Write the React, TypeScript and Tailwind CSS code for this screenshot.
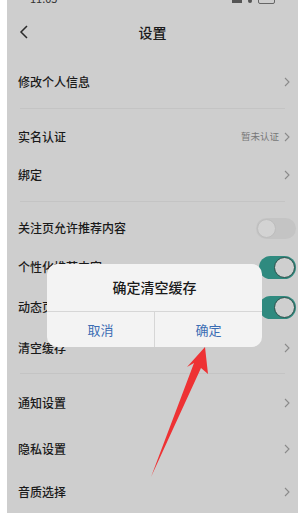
import React from "react";

const font = { fontFamily: '"Noto Sans CJK SC", "Noto Sans", sans-serif' };

function Chevron() {
  return (
    <svg width="6" height="10" viewBox="0 0 6 10" className="shrink-0">
      <path d="M1 1l4 4-4 4" fill="none" stroke="#8a8a8a" strokeWidth="1.1" />
    </svg>
  );
}

function Toggle({ on }: { on: boolean }) {
  return on ? (
    <div className="w-[37px] h-[23px] rounded-full bg-[#2f8a7f] flex items-center justify-end pr-[1px]">
      <div className="w-[21px] h-[21px] rounded-full bg-[#cfcfcf] border-[1.5px] border-[#2c4f4a]" />
    </div>
  ) : (
    <div className="w-[40px] h-[21px] rounded-full bg-[#c4c4c4] flex items-center pl-[1px]">
      <div className="w-[19px] h-[19px] rounded-full bg-[#d3d3d3] border border-[#bdbdbd]" />
    </div>
  );
}

function Row({
  label,
  h,
  right,
  pr = "pr-[8px]",
}: {
  label: string;
  h: string;
  right?: React.ReactNode;
  pr?: string;
}) {
  return (
    <div className={`flex items-center justify-between pl-[11px] ${pr} ${h}`}>
      <span className="text-[12px] font-medium text-[#1a1a1a] leading-none">{label}</span>
      {right ?? <Chevron />}
    </div>
  );
}

function Divider({ h }: { h: string }) {
  return (
    <div className={`flex items-center px-[13px] ${h}`}>
      <div className="h-px w-full bg-[#c4c4c4]" />
    </div>
  );
}

export default function App() {
  return (
    <div className="relative w-[306px] h-[514px] bg-white overflow-hidden" style={font}>
      <div className="ml-[7px] w-[291px] h-[513px] bg-[#cecece] flex flex-col">
        {/* status */}
        <div className="h-[5px] overflow-hidden flex justify-between px-[23px]">
          <span className="text-[11px] text-[#333] leading-none -mt-[7px]">11:05</span>
          <div className="flex items-center gap-[6px] -mt-[4px]">
            <div className="w-[10px] h-[5px] bg-[#555]" />
            <div className="w-[4px] h-[4px] bg-[#555] rounded-full" />
            <div className="w-[17px] h-[6px] border border-[#666] rounded-[2px]" />
          </div>
        </div>
        {/* header */}
        <div className="h-[54px] flex items-center relative">
          <svg width="10" height="14" viewBox="0 0 10 14" className="ml-[12px]">
            <path d="M8 1L2 7l6 6" fill="none" stroke="#2a2a2a" strokeWidth="1.5" />
          </svg>
          <span className="absolute left-0 right-0 text-center text-[14px] font-medium text-[#1a1a1a]">设置</span>
        </div>
        <Row label="修改个人信息" h="h-[46px]" />
        <Divider h="h-[7px]" />
        <div className="h-[6px]" />
        <Row
          label="实名认证"
          h="h-[38px]"
          right={
            <div className="flex items-center gap-[5px]">
              <span className="text-[9.5px] text-[#777] leading-none">暂未认证</span>
              <Chevron />
            </div>
          }
        />
        <Row label="绑定" h="h-[38px]" />
        <Divider h="h-[14px]" />
        <Row label="关注页允许推荐内容" h="h-[40px]" pr="pr-[2px]" right={<Toggle on={false} />} />
        <Row label="个性化推荐内容" h="h-[38px]" pr="pr-[2px]" right={<Toggle on />} />
        <Row label="动态页展示内容" h="h-[42px]" pr="pr-[2px]" right={<Toggle on />} />
        <Row label="清空缓存" h="h-[40px]" />
        <Divider h="h-[10px]" />
        <Row label="通知设置" h="h-[50px]" />
        <Row label="隐私设置" h="h-[42px]" />
        <Row label="音质选择" h="h-[43px]" />
      </div>

      {/* dialog */}
      <div className="absolute left-[47px] top-[264px] w-[215px] h-[83px] bg-[#f3f3f3] rounded-[10px] flex flex-col">
        <div className="h-[48px] flex items-center justify-center border-b border-[#d6d6d6]">
          <span className="text-[14px] font-medium text-[#1a1a1a]">确定清空缓存</span>
        </div>
        <div className="flex flex-1">
          <div className="flex-1 flex items-center justify-center border-r border-[#d6d6d6]">
            <span className="text-[13px] text-[#3b6db3]">取消</span>
          </div>
          <div className="flex-1 flex items-center justify-center">
            <span className="text-[13px] text-[#3b6db3]">确定</span>
          </div>
        </div>
      </div>

      {/* arrow */}
      <svg className="absolute left-0 top-0 pointer-events-none" width="306" height="514" viewBox="0 0 306 514">
        <polygon points="205,347 208,374 201,368 151,477 194,363 187,367" fill="#ee3234" />
      </svg>
    </div>
  );
}
